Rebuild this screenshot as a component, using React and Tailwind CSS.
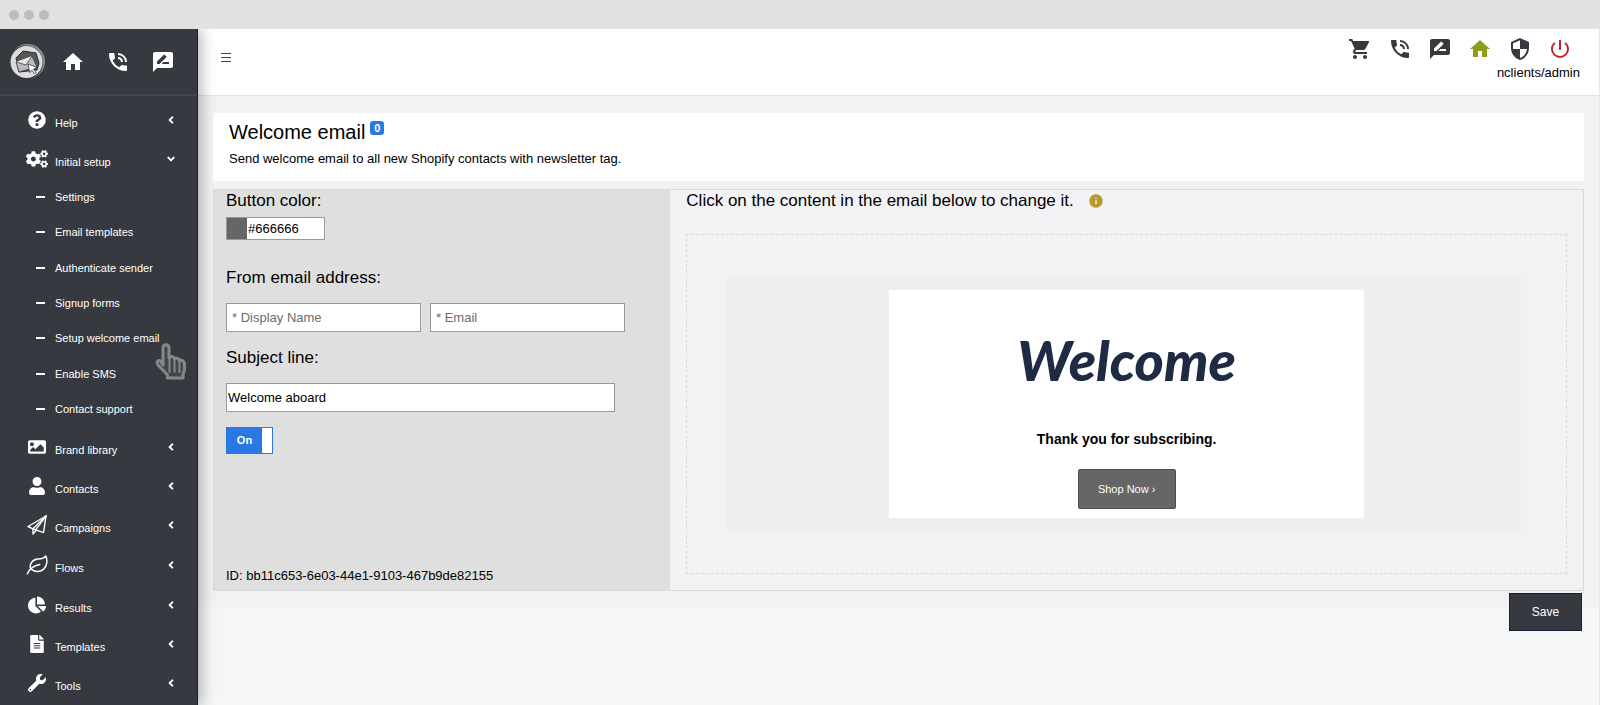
import React, { useState } from 'react';
import {
  MdHome,
  MdPhoneInTalk,
  MdRateReview,
  MdShoppingCart,
  MdSecurity,
  MdPowerSettingsNew,
  MdInfo,
} from 'react-icons/md';
import {
  FaQuestionCircle,
  FaCogs,
  FaImage,
  FaUser,
  FaChartPie,
  FaFileAlt,
  FaWrench,
  FaAngleLeft,
  FaAngleDown,
} from 'react-icons/fa';

const LeafIcon = ({ size }) => (
  <svg width={size} height={size} viewBox="0 0 24 24" fill="none" stroke="currentColor" strokeWidth="1.6" strokeLinecap="round" strokeLinejoin="round">
    <path d="M1.5 21.5C3.5 17 7.5 13 15 11.5" />
    <path d="M5 16.5C3.5 10.5 7 6 13 5.5C17 5.2 20 4.8 21.5 2C23.8 7 23 13.5 19 16.8C15 20 9.5 19.5 6.5 17" />
  </svg>
);

const PlaneIcon = ({ size }) => (
  <svg width={size} height={size} viewBox="0 0 20 20" fill="none" stroke="currentColor" strokeWidth="1.4" strokeLinecap="round" strokeLinejoin="round">
    <path d="M19 1L1 11.5L6 13.8L16.5 17.6Z" />
    <path d="M19 1L6 13.8V19L9.2 15.2" />
    <path d="M19 1L8.8 14.6" />
  </svg>
);

const helpItem = { label: 'Help', icon: FaQuestionCircle, size: 18 };
const setupItem = { label: 'Initial setup', icon: FaCogs, size: 22 };

const setupItems = [
  'Settings',
  'Email templates',
  'Authenticate sender',
  'Signup forms',
  'Setup welcome email',
  'Enable SMS',
  'Contact support',
];

const menuItems = [
  { label: 'Brand library', icon: FaImage, size: 18 },
  { label: 'Contacts', icon: FaUser, size: 18 },
  { label: 'Campaigns', icon: PlaneIcon, size: 20, tall: true },
  { label: 'Flows', icon: LeafIcon, size: 22, tall: true },
  { label: 'Results', icon: FaChartPie, size: 18 },
  { label: 'Templates', icon: FaFileAlt, size: 18 },
  { label: 'Tools', icon: FaWrench, size: 18 },
];

const Logo = () => (
  <svg width="38" height="38" viewBox="0 0 38 38">
    <circle cx="19.5" cy="18.5" r="17.5" fill="#8a8c8e" />
    <circle cx="18" cy="19.5" r="17" fill="#33363b" />
    <circle cx="18.5" cy="19" r="16" fill="#dcdcdc" />
    <path d="M8 15L15 8L28 10L31 20L29 27L11 29Z" fill="#54575a" stroke="#2c2f33" strokeWidth="1" />
    <path d="M8 19L24 13L29 24L11 29Z" fill="#b9babc" stroke="#3c3f43" strokeWidth="0.8" />
    <path d="M8 19L18 22L24 13" fill="#e8e8e8" stroke="#3c3f43" strokeWidth="0.8" />
    <path d="M20 21L29 24.5L25.5 26L28 29.5L26.3 30.6L24 27.2L21.8 29.5Z" fill="#fff" stroke="#3c3f43" strokeWidth="0.8" />
  </svg>
);

const HandCursor = () => (
  <svg className="pointer-events-none absolute left-[155px] top-[314px]" width="33" height="37" viewBox="0 0 33 37">
    <path
      d="M8 22V5C8 0.5 14 0.5 14 5V15C15 13 19 13 19.5 16C21 14.5 24 15 24.5 17.5C26.5 16.5 29.5 18 29.5 21V26C29.5 29 28 30 28 32V35H12.5V32L3 22C0.5 18.5 4 16 6 18.5Z"
      fill="#41464b"
      stroke="#85888b"
      strokeWidth="3"
      strokeLinejoin="round"
    />
    <path d="M14.5 14V29M19.5 17V29M24.5 19V29" stroke="#85888b" strokeWidth="2" strokeLinecap="round" />
  </svg>
);

const MenuItem = ({ item, open }) => {
  const Icon = item.icon;
  const Arrow = open ? FaAngleDown : FaAngleLeft;

  return (
    <a href="#" className={`flex items-center pl-6 pr-5 ${item.tall ? 'h-10' : 'h-[39px]'}`}>
      <span className="flex w-[26px] justify-center">
        <Icon size={item.size} />
      </span>
      <span className="ml-[5px] flex-1 pt-[6px]">{item.label}</span>
      <Arrow size={12} />
    </a>
  );
};

const Sidebar = () => (
  <aside className="relative z-10 flex w-[198px] shrink-0 flex-col border-r border-[#14203a] bg-[#363a40] text-[11px] leading-4 text-white shadow-[3px_0_14px_rgba(0,0,0,0.3)]">
    <div className="flex h-[67px] items-center border-b-2 border-[#43474b] pl-2">
      <Logo />
      <a href="#" aria-label="Home" className="ml-[15px]"><MdHome size={24} /></a>
      <a href="#" aria-label="Call us" className="ml-[21px]"><MdPhoneInTalk size={24} /></a>
      <a href="#" aria-label="Feedback" className="ml-[21px]"><MdRateReview size={24} /></a>
    </div>
    <nav className="pt-1">
      <MenuItem item={helpItem} />
      <MenuItem item={setupItem} open />
      <ul className="flex h-[249px] flex-col pt-px">
        {setupItems.map(label => (
          <li key={label} className="flex flex-1 items-center pl-9">
            <span className="h-[2px] w-[9px] bg-white"></span>
            <a href="#" className="ml-[10px]">{label}</a>
          </li>
        ))}
      </ul>
      {menuItems.map(item => (
        <MenuItem key={item.label} item={item} />
      ))}
    </nav>
    <HandCursor />
  </aside>
);

const Header = () => (
  <header className="flex h-[67px] items-start justify-between border-b border-[#e2e2e4] bg-white pl-[23px] pr-[19px]">
    <button aria-label="Toggle menu" className="mt-6 flex w-[10px] flex-col gap-[3px]">
      <span className="h-px w-full bg-[#444]"></span>
      <span className="h-px w-full bg-[#444]"></span>
      <span className="h-px w-full bg-[#444]"></span>
    </button>
    <div className="flex flex-col items-end pt-2 text-[#363a40]">
      <div className="flex items-center gap-4 pr-2">
        <a href="#" aria-label="Cart"><MdShoppingCart size={24} /></a>
        <a href="#" aria-label="Call us"><MdPhoneInTalk size={24} /></a>
        <a href="#" aria-label="Feedback"><MdRateReview size={24} /></a>
        <a href="#" aria-label="Home" className="text-[#8f9d1c]"><MdHome size={24} /></a>
        <a href="#" aria-label="Security"><MdSecurity size={24} /></a>
        <a href="#" aria-label="Log out" className="text-[#c1272d]"><MdPowerSettingsNew size={24} /></a>
      </div>
      <span className="mt-1 text-[13px] leading-4 text-black">nclients/admin</span>
    </div>
  </header>
);

const SettingsForm = () => {
  const [color, setColor] = useState('#666666');
  const [subject, setSubject] = useState('Welcome aboard');
  const [enabled, setEnabled] = useState(true);

  return (
    <form className="flex w-1/3 flex-col bg-[#dfdfdf] pl-3 text-[13px]">
      <label htmlFor="color" className="text-[17px] leading-[22px]">Button color:</label>
      <div className="mt-[5px] flex h-[23px] w-[99px] border border-[#999] bg-white">
        <span className="w-5" style={{ backgroundColor: color }}></span>
        <input id="color" value={color} onChange={e => setColor(e.target.value)} className="w-0 flex-1 pl-px outline-none" />
      </div>

      <label htmlFor="name" className="mt-[27px] text-[17px] leading-[22px]">From email address:</label>
      <div className="mt-[14px] flex gap-[9px]">
        <input id="name" placeholder="* Display Name" className="h-[29px] w-[195px] border border-[#999] bg-white pl-[5px] placeholder:text-[#6c6c6c]" />
        <input aria-label="Email" placeholder="* Email" className="h-[29px] w-[195px] border border-[#999] bg-white pl-[5px] placeholder:text-[#6c6c6c]" />
      </div>

      <label htmlFor="subject" className="mt-[15px] text-[17px] leading-[22px]">Subject line:</label>
      <input id="subject" value={subject} onChange={e => setSubject(e.target.value)} className="mt-[14px] h-[29px] w-[389px] border border-[#999] bg-white pl-px" />

      <label className="relative mt-[15px] flex h-[27px] w-[47px] border border-[#2a78e4] bg-[#2a78e4] text-[11px] font-bold text-white">
        <input type="checkbox" checked={enabled} onChange={e => setEnabled(e.target.checked)} className="sr-only" />
        <span className="flex flex-1 items-center justify-center">{enabled ? 'On' : 'Off'}</span>
        <span className="w-[10px] bg-white"></span>
      </label>

      <p className="mt-auto mb-[6px] leading-4">ID: bb11c653-6e03-44e1-9103-467b9de82155</p>
    </form>
  );
};

const EmailPreview = () => (
  <section className="flex flex-1 flex-col px-4 pb-4">
    <h2 className="flex items-center text-[17px] leading-[22px]">
      Click on the content in the email below to change it.
      <MdInfo size={16} className="ml-[14px] text-[#b8972b]" />
    </h2>
    <div className="mt-[22px] border border-dashed border-[#d9d9d9] p-[39px]">
      <div className="flex justify-center bg-[#efefed] py-4">
        <div className="flex w-[475px] flex-col items-center bg-white pb-[9px] pt-[28px]">
          <div className="font-['Lato'] text-[56px] font-black italic leading-[84px] text-[#1f2b45]">Welcome</div>
          <p className="mt-[27px] text-[14px] font-bold leading-5">Thank you for subscribing.</p>
          <button className="mt-5 h-10 w-[98px] rounded-[2px] border border-[#4b4e52] bg-[#666] text-[11px] text-white">Shop Now ›</button>
        </div>
      </div>
    </div>
  </section>
);

export default function App() {
  return (
    <div className="flex min-h-screen flex-col bg-[#f5f6f8] font-['Liberation_Sans',Arial,sans-serif] text-black">
      <div className="relative z-20 flex h-[29px] items-center gap-[5px] bg-[#e1e1e1] pl-[9px]">
        <span className="h-[10px] w-[10px] rounded-full bg-[#bcbcbe]"></span>
        <span className="h-[10px] w-[10px] rounded-full bg-[#bcbcbe]"></span>
        <span className="h-[10px] w-[10px] rounded-full bg-[#bcbcbe]"></span>
      </div>
      <div className="flex flex-1">
        <Sidebar />
        <div className="flex min-w-0 flex-1 flex-col border-r border-[#e6e6e8]">
          <Header />
          <main className="bg-[#f2f2f4] px-[15px] pb-4 pt-[17px]">
            <div className="bg-white px-4 pb-[14px] pt-[7px]">
              <h1 className="flex items-start text-[20px] leading-6">
                Welcome email
                <span className="ml-[5px] mt-px h-[14px] w-[14px] rounded-[3px] bg-[#2a78e4] text-center text-[11px] font-bold leading-[14px] text-white">0</span>
              </h1>
              <p className="mt-[7px] text-[13px] leading-4">Send welcome email to all new Shopify contacts with newsletter tag.</p>
            </div>
            <div className="mt-2 flex border border-[#d9d9db]">
              <SettingsForm />
              <EmailPreview />
            </div>
          </main>
          <div className="-mt-[14px] flex justify-end pr-[17px]">
            <button className="h-[38px] w-[73px] border border-[#14203a] bg-[#363a40] text-[12px] text-white">Save</button>
          </div>
        </div>
      </div>
    </div>
  );
}
